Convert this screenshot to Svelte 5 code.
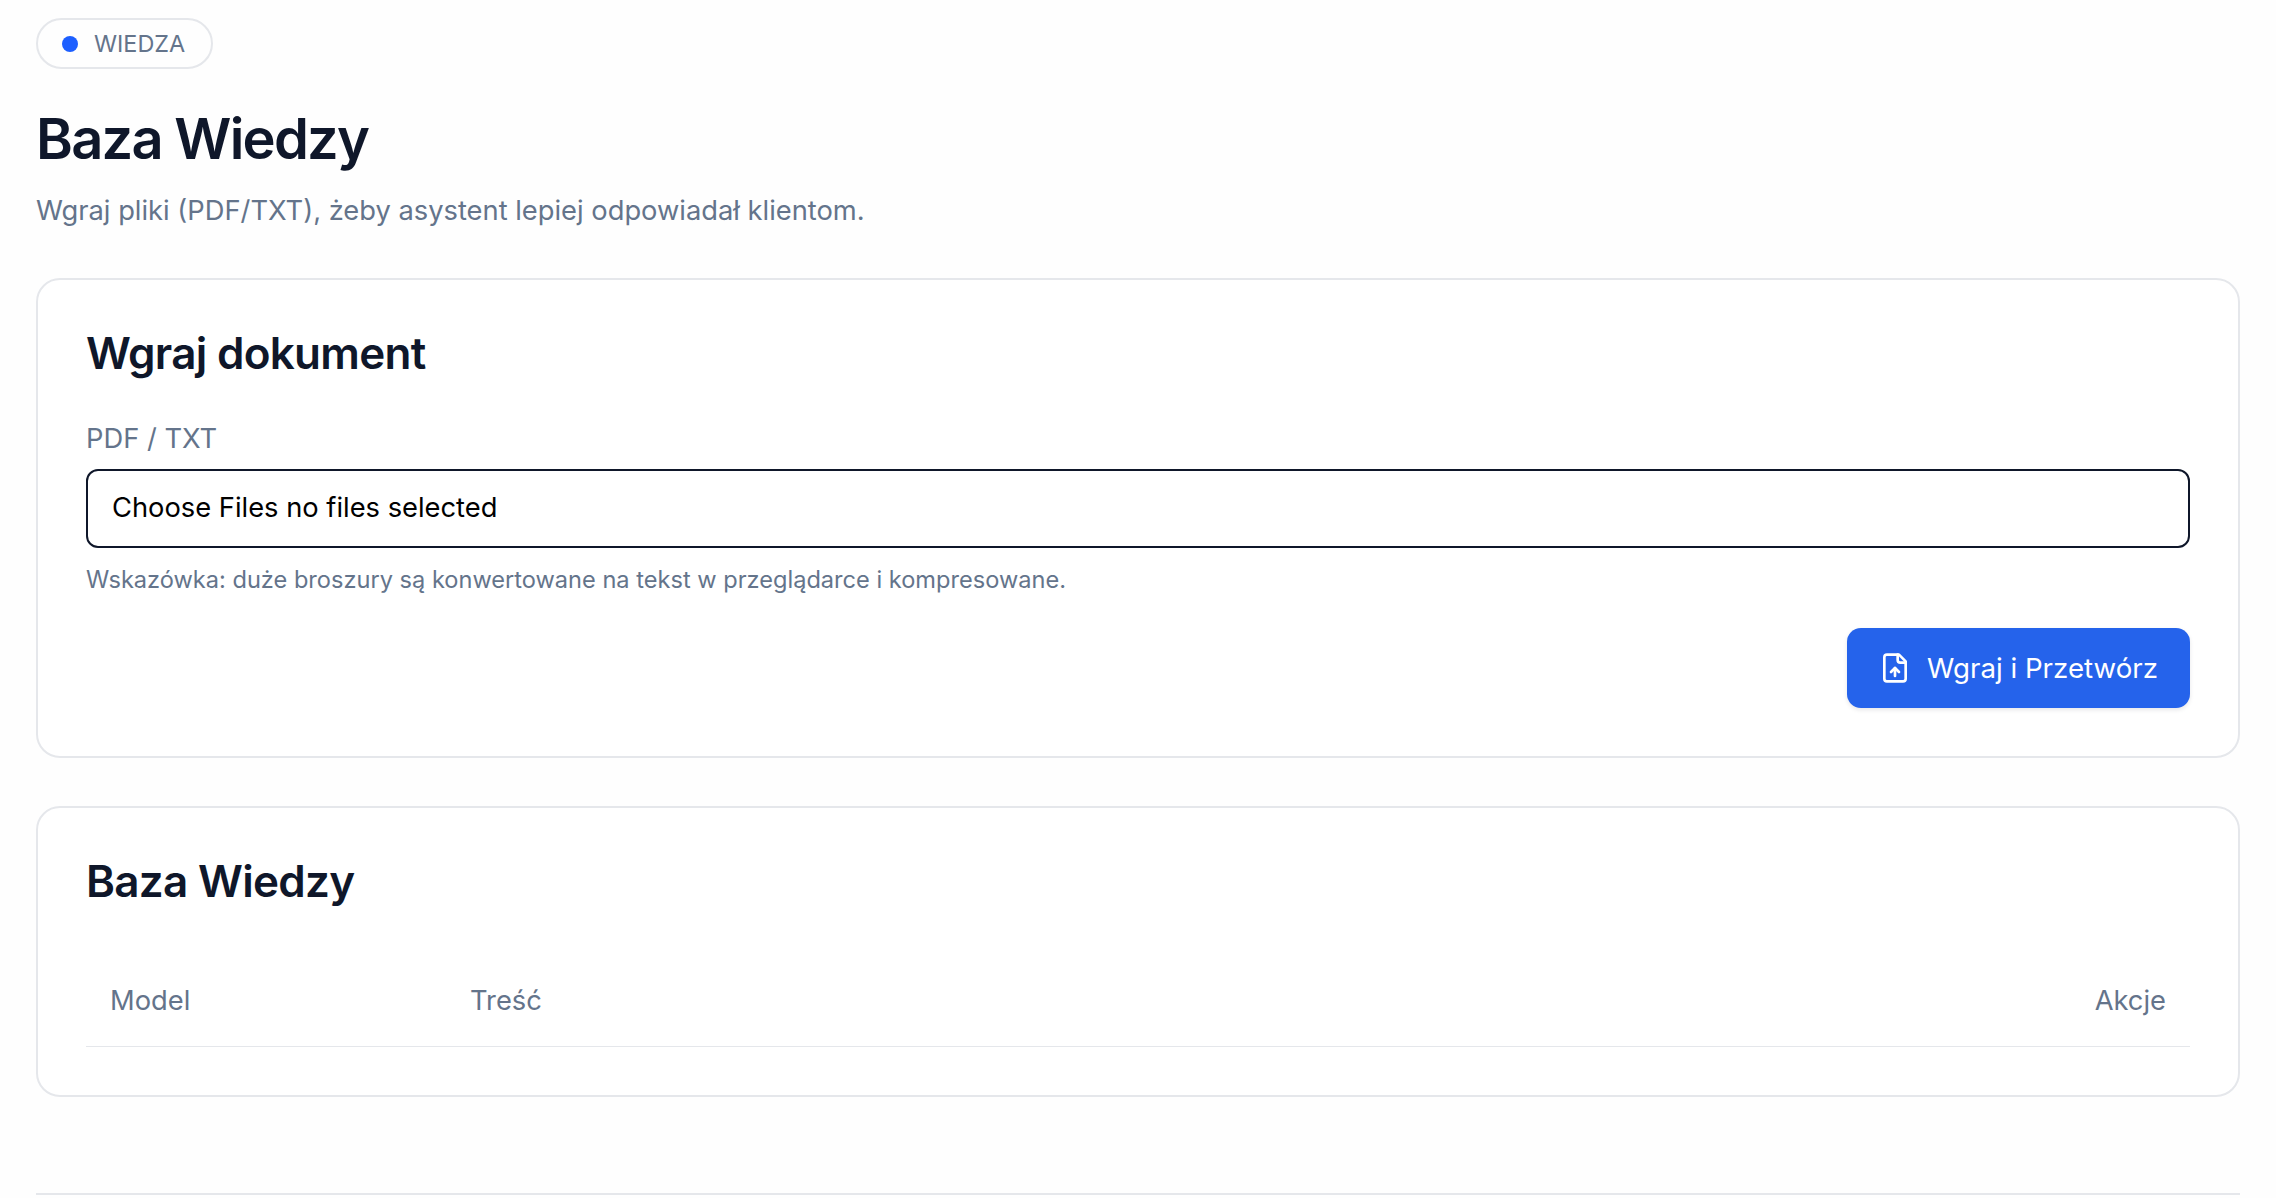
<script lang="ts">
  const columns = [
    { label: 'Model', cls: 'col-model' },
    { label: 'Treść', cls: 'col-content' },
    { label: 'Akcje', cls: 'col-actions' }
  ];
</script>

<main class="page">
  <header class="head">
    <span class="pill"><span class="dot"></span>WIEDZA</span>
    <h1>Baza Wiedzy</h1>
    <p class="lead">Wgraj pliki (PDF/TXT), żeby asystent lepiej odpowiadał klientom.</p>
  </header>

  <section class="card">
    <h2>Wgraj dokument</h2>
    <div class="field-label">PDF / TXT</div>
    <div class="file-input">Choose Files no files selected</div>
    <p class="hint">Wskazówka: duże broszury są konwertowane na tekst w przeglądarce i kompresowane.</p>
    <div class="actions">
      <button class="btn" type="button">
        <svg viewBox="0 0 24 24" width="32" height="32" fill="none" stroke="currentColor" stroke-width="2" stroke-linecap="round" stroke-linejoin="round">
          <path d="M15 2H6a2 2 0 0 0-2 2v16a2 2 0 0 0 2 2h12a2 2 0 0 0 2-2V7Z" />
          <path d="M14 2v4a2 2 0 0 0 2 2h4" />
          <path d="M12 18v-6" />
          <path d="m9 15 3-3 3 3" />
        </svg>
        Wgraj i Przetwórz
      </button>
    </div>
  </section>

  <section class="card">
    <h2>Baza Wiedzy</h2>
    <table>
      <thead>
        <tr>
          {#each columns as col}
            <th class={col.cls}>{col.label}</th>
          {/each}
        </tr>
      </thead>
    </table>
  </section>

  <footer class="foot"></footer>
</main>

<style>
  :global(body) {
    margin: 0;
    background: #fefefe;
    font-family: Inter, "Liberation Sans", sans-serif;
    color: #0f172a;
  }

  .page {
    padding: 18px 36px 0;
    height: 1180px;
    overflow: hidden;
  }

  .pill {
    display: inline-flex;
    align-items: center;
    gap: 16px;
    height: 47px;
    padding: 0 26px 0 24px;
    border: 2px solid #e5e7eb;
    border-radius: 999px;
    font-size: 23.4px;
    color: #64748b;
  }

  .dot {
    width: 16px;
    height: 16px;
    border-radius: 50%;
    background: #1d5fff;
  }

  h1 {
    margin: 35px 0 0;
    font-size: 56px;
    line-height: 70px;
    font-weight: 600;
    letter-spacing: -1.75px;
  }

  .lead {
    margin: 18px 0 0;
    font-size: 27.3px;
    line-height: 38px;
    color: #64748b;
  }

  .card {
    margin-top: 48px;
    padding: 45px 48px 48px;
    background: #fff;
    border: 2px solid #e5e7eb;
    border-radius: 24px;
  }

  h2 {
    margin: 0;
    font-size: 44px;
    line-height: 56px;
    font-weight: 600;
    letter-spacing: -0.7px;
  }

  .field-label {
    margin-top: 39px;
    font-size: 27.3px;
    line-height: 38px;
    color: #64748b;
  }

  .file-input {
    display: flex;
    align-items: center;
    height: 73px;
    margin-top: 11px;
    padding: 0 24px 2px;
    border: 2px solid #0f172a;
    border-radius: 12px;
    font-size: 27.3px;
    color: #000;
  }

  .hint {
    margin: 16px 0 0;
    font-size: 23.6px;
    line-height: 32px;
    color: #64748b;
  }

  .actions {
    display: flex;
    justify-content: flex-end;
    margin-top: 32px;
  }

  .btn {
    display: inline-flex;
    align-items: center;
    gap: 16px;
    height: 80px;
    padding: 0 32px;
    border: 0;
    border-radius: 14px;
    background: #2563eb;
    color: #fff;
    font: 400 27.7px Inter, sans-serif;
    box-shadow: 0 2px 4px rgba(15, 23, 42, 0.1);
  }

  table {
    width: 100%;
    margin-top: 47px;
    border-collapse: collapse;
  }

  th {
    padding: 26px 24px;
    border-bottom: 1px solid #e5e7eb;
    font-size: 27.3px;
    line-height: 38px;
    font-weight: 425;
    color: #64748b;
    text-align: left;
  }

  .col-model {
    width: 312px;
  }

  .col-actions {
    text-align: right;
  }

  .foot {
    margin-top: 96px;
    border-top: 2px solid #e5e7eb;
  }
</style>
